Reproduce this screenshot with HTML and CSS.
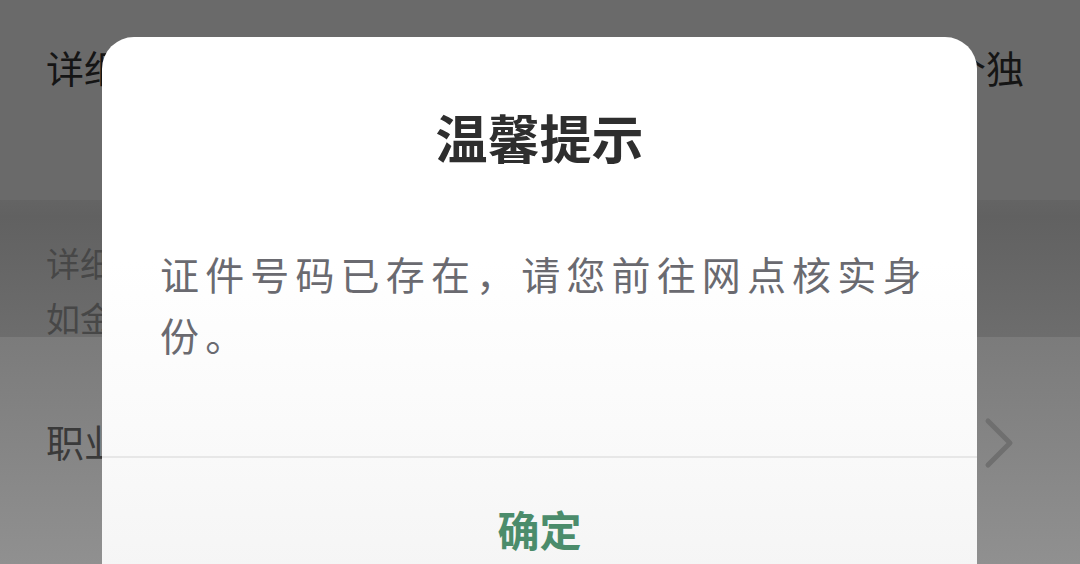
FILE: index.html
```html
<!DOCTYPE html>
<html lang="zh-CN">
<head>
    <meta charset="UTF-8">
    <meta name="viewport" content="width=device-width, initial-scale=1.0">
    <title>温馨提示</title>
    <link rel="stylesheet" href="styles.css">
</head>
<body>

<div class="page">
    <div class="form-row row-top">
        <span class="label">详细地址</span>
        <span class="value">一个独</span>
    </div>
    <div class="tip">
        详细地址请填写到门牌号，例如街道、小区、楼栋号，<br>
        如金融机构网点地址
    </div>
    <div class="form-row row-link">
        <span class="label">职业</span>
        <svg class="chevron" width="32" height="52" viewBox="0 0 32 52">
            <polyline points="4,4 26,26 4,48" fill="none" stroke="#6f6f6f" stroke-width="5" stroke-linecap="round" stroke-linejoin="round"/>
        </svg>
    </div>
</div>

<div class="dialog">
    <h2 class="dialog-title">温馨提示</h2>
    <p class="dialog-msg">证件号码已存在，请您前往网点核实身份。</p>
    <div class="dialog-actions">
        <button class="btn-ok">确定</button>
    </div>
</div>

</body>
</html>
```

FILE: styles.css
```css
body {
    margin: 0;
    width: 1080px;
    height: 564px;
    overflow: hidden;
    font-family: "Noto Sans CJK SC", "Noto Sans", sans-serif;
    background: #6a6a6a;
}
.page {
    display: flex;
    flex-direction: column;
    height: 564px;
}
.form-row {
    display: flex;
    justify-content: space-between;
    padding: 0 56px 0 46px;
    font-size: 38px;
}
.row-top {
    height: 200px;
    padding-top: 40px;
    box-sizing: border-box;
    line-height: 53px;
    color: #151515;
    background: #6a6a6a;
}
.tip {
    height: 137px;
    box-sizing: border-box;
    padding: 35px 46px 0;
    font-size: 34px;
    line-height: 55px;
    color: #474747;
    white-space: nowrap;
    background: linear-gradient(#646464, #616161 12%, #6d6d6d);
}
.row-link {
    flex: 1;
    align-items: center;
    padding-bottom: 20px;
    color: #3a3a3a;
    background: linear-gradient(#7b7b7b, #909090);
}
.chevron {
    margin-right: 8px;
    margin-top: 4px;
}
.dialog {
    position: absolute;
    left: 102px;
    top: 37px;
    width: 875px;
    height: 560px;
    border-radius: 32px 32px 0 0;
    background: linear-gradient(#ffffff, #ffffff 40%, #f9f9f9 75%, #f4f4f4);
    display: flex;
    flex-direction: column;
}
.dialog-title {
    margin: 70px 0 0;
    font-size: 52px;
    line-height: 60px;
    font-weight: bold;
    text-align: center;
    color: #2e2e2e;
}
.dialog-msg {
    margin: 0;
    padding: 76px 48px 91px 58px;
    font-size: 39px;
    line-height: 61px;
    letter-spacing: 6.15px;
    color: #6a6a70;
}
.dialog-actions {
    border-top: 2px solid #e7e7e7;
    padding-top: 41px;
    text-align: center;
}
.btn-ok {
    border: none;
    background: none;
    padding: 0;
    font-family: inherit;
    font-size: 42px;
    line-height: 60px;
    font-weight: bold;
    color: #4b8c6b;
}
```
